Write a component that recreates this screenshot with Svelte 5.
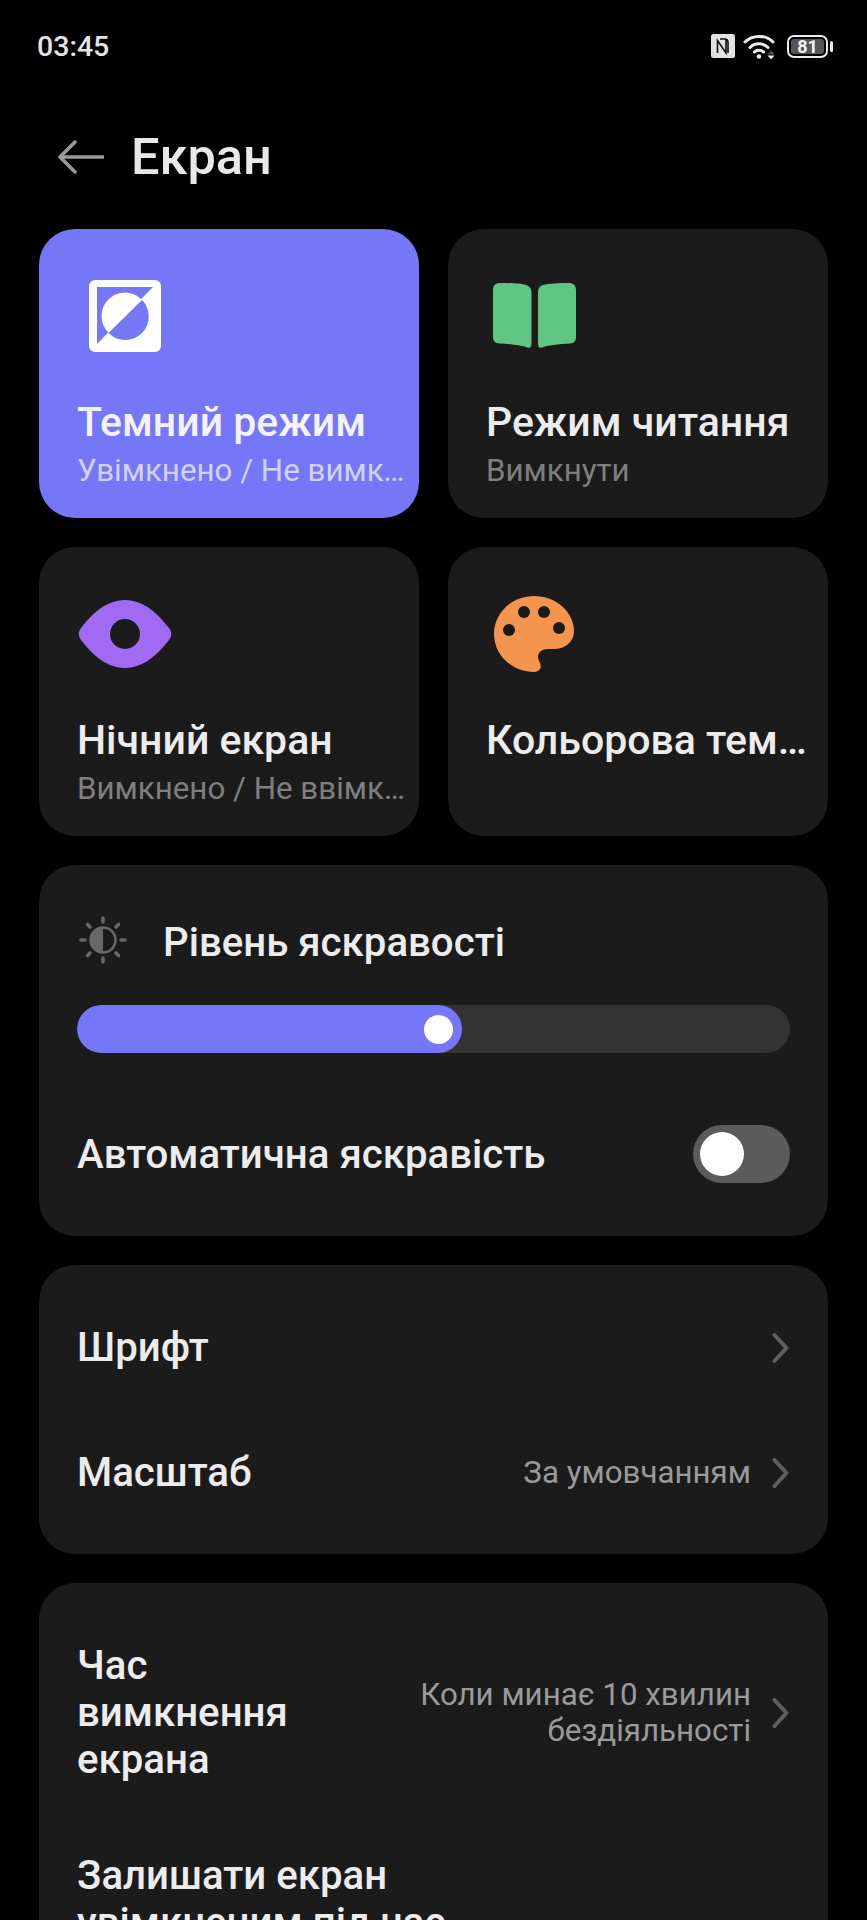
<script>
  const tiles = [
    { title: 'Темний режим', sub: 'Увімкнено / Не вимкнено', icon: 'dark', active: true },
    { title: 'Режим читання', sub: 'Вимкнути', icon: 'book' },
    { title: 'Нічний екран', sub: 'Вимкнено / Не ввімкнено', icon: 'eye' },
    { title: 'Кольорова температура', sub: '', icon: 'palette' }
  ];
  const brightness = 54;
</script>

{#snippet chevron()}
  <svg class="chevron" viewBox="0 0 18 32" width="18" height="32">
    <path d="M2.500 3 14.500 16 2.500 29" fill="none" stroke="#5f5f5f" stroke-width="4" stroke-linecap="round" stroke-linejoin="round" />
  </svg>
{/snippet}

<div class="screen">
  <div class="status">
    <span class="time">03:45</span>
    <div class="status-icons">
      <svg viewBox="0 0 24 24" width="24" height="24">
        <rect width="24" height="24" rx="2.500" fill="#e2e2e2" />
        <path d="M6.500 19V6.500L15 19V5M9 5h4.500c2.500 0 3.500 1.500 3.500 3.500V19" fill="none" stroke="#111" stroke-width="1.600" />
      </svg>
      <svg viewBox="0 0 36 26" width="36" height="26">
        <g fill="none" stroke="#ececec" stroke-width="3" stroke-linecap="round">
          <path d="M2 9C9 1.500 23 1.500 30 9" />
          <path d="M7 14.500C12 9.500 20 9.500 25 14.500" />
          <path d="M11.500 19C14 16.800 18 16.800 20.500 19" />
        </g>
        <circle cx="16" cy="23.500" r="2.300" fill="#ececec" />
        <path d="M28 17.500 31.500 21.500H24.500Z" fill="#555" />
        <path d="M24.500 22.500H31.500L28 26.500Z" fill="#ececec" />
      </svg>
      <div class="battery">
        <div class="battery-body"><span class="battery-level">81</span></div>
        <div class="battery-cap"></div>
      </div>
    </div>
  </div>

  <header class="header">
    <svg viewBox="0 0 46 36" width="46" height="36">
      <path d="M17 3 2 18 17 33M2 18H45" fill="none" stroke="#9a9a9a" stroke-width="3.500" stroke-linecap="round" stroke-linejoin="round" />
    </svg>
    <h1>Екран</h1>
  </header>

  <div class="tiles">
    {#each tiles as tile}
      <div class="card tile" class:active={tile.active}>
        <div class="tile-icon {tile.icon}">
          {#if tile.icon === 'dark'}
            <svg viewBox="0 0 72 72" width="72" height="72">
              <path fill="#fff" fill-rule="evenodd" d="M6 0H66a6 6 0 0 1 6 6V66a6 6 0 0 1-6 6H6a6 6 0 0 1-6-6V6a6 6 0 0 1 6-6ZM8 7V64L64 7Z" />
              <circle cx="36" cy="36" r="23.500" fill="#fff" />
              <path fill="#7676f8" d="M53 20A23.500 23.500 0 0 1 19.500 53Z" />
            </svg>
          {:else if tile.icon === 'book'}
            <svg viewBox="0 0 84 68" width="84" height="68">
              <path fill="#5fc583" d="M7 1C17 1 28 1.500 33 3c4 1.500 5.500 4 5.500 8V62c0 3-1.500 4.500-4 3.500-5-2-17-3.500-28-4C2.500 61.300 0 59 0 55V8C0 3.500 2.500 1 7 1Z" />
              <path fill="#5fc583" d="M76 1C66 1 55 1.500 50 3c-4 1.500-5 4-5 8V62c0 3 1.500 4.500 4 3.500 5-2 17-3.500 28-4 4 -.2 6-2.500 6-6.500V8c0-4.500-2.500-7-7-7Z" />
            </svg>
          {:else if tile.icon === 'eye'}
            <svg viewBox="0 0 94 68" width="94" height="68">
              <path fill="#a06af5" d="M47 0C66 0 80 14 91 28c3 3.500 3 8.500 0 12C80 54 66 68 47 68 28 68 14 54 3 40c-3-3.500-3-8.500 0-12C14 14 28 0 47 0Z" />
              <circle cx="47" cy="34" r="15" fill="#1b1b1c" />
            </svg>
          {:else}
            <svg viewBox="0 0 82 78" width="82" height="78">
              <path fill="#f4954f" d="M41 1C63 1 81 17 81 36c0 11-9 18-20 18H55c-6 0-10 3-10 8 0 2 1 4 2 6 2 4 0 9-6 9C19 77 1 60 1 39S19 1 41 1Z" />
              <circle cx="16" cy="35" r="6" fill="#1b1b1c" />
              <circle cx="31" cy="17" r="6" fill="#1b1b1c" />
              <circle cx="51" cy="17" r="6" fill="#1b1b1c" />
              <circle cx="66" cy="33" r="6" fill="#1b1b1c" />
            </svg>
          {/if}
        </div>
        <div class="tile-title">{tile.title}</div>
        {#if tile.sub}<div class="tile-sub">{tile.sub}</div>{/if}
      </div>
    {/each}
  </div>

  <section class="card brightness">
    <div class="brightness-head">
      <svg viewBox="0 0 48 48" width="48" height="48">
        <g stroke="#686868" stroke-width="3.600" stroke-linecap="round">
          <path d="M24 2V6M24 42V46M2 24H6M42 24H46M8.500 8.500 11 11M37 37 39.500 39.500M8.500 39.500 11 37M37 11 39.500 8.500" />
        </g>
        <circle cx="24" cy="24" r="12.500" fill="none" stroke="#686868" stroke-width="2.500" />
        <path d="M24 11A13 13 0 0 0 24 37Z" fill="#686868" />
      </svg>
      <span class="row-title">Рівень яскравості</span>
    </div>
    <div class="slider">
      <div class="slider-fill" style="width: {brightness}%"><span class="slider-thumb"></span></div>
    </div>
    <div class="auto-row">
      <span class="row-title">Автоматична яскравість</span>
      <div class="toggle"><span class="knob"></span></div>
    </div>
  </section>

  <section class="card group">
    <div class="row">
      <span class="row-title">Шрифт</span>
      {@render chevron()}
    </div>
    <div class="row">
      <span class="row-title">Масштаб</span>
      <span class="row-value">За умовчанням</span>
      {@render chevron()}
    </div>
  </section>

  <section class="card group last">
    <div class="row tall">
      <span class="row-title narrow">Час вимкнення екрана</span>
      <span class="row-value">Коли минає 10 хвилин бездіяльності</span>
      {@render chevron()}
    </div>
    <div class="row second">
      <span class="row-title wide">Залишати екран увімкненим під час</span>
    </div>
  </section>
</div>

<style>
  :global(body) {
    background: #000;
  }

  .screen {
    height: 1920px;
    overflow: hidden;
    box-sizing: border-box;
    padding: 0 39px;
    background: #000;
    color: #ececec;
    font-family: Roboto, "Noto Sans", sans-serif;
  }

  .status {
    height: 92px;
    display: flex;
    align-items: center;
    justify-content: space-between;
    margin: 0 -5px 0 -2px;
  }
  .time {
    font-size: 28.500px;
    font-weight: 500;
    color: #e4e4e4;
  }
  .status-icons {
    display: flex;
    align-items: center;
    gap: 8px;
  }
  .battery {
    display: flex;
    align-items: center;
    gap: 2px;
  }
  .battery-body {
    width: 41px;
    height: 23px;
    padding: 2px;
    border: 2px solid #ececec;
    border-radius: 7px;
    display: flex;
    box-sizing: border-box;
  }
  .battery-level {
    flex: 1;
    background: #555;
    border-radius: 3px;
    color: #f2f2f2;
    font-size: 18px;
    font-weight: 700;
    line-height: 15px;
    text-align: center;
  }
  .battery-cap {
    width: 3px;
    height: 11px;
    background: #ececec;
    border-radius: 2px;
  }

  .header {
    height: 137px;
    display: flex;
    align-items: center;
    gap: 27px;
    padding-left: 19px;
    box-sizing: border-box;
    padding-bottom: 8px;
  }
  h1 {
    margin: 0;
    font-size: 50.500px;
    font-weight: 500;
    color: #e8e8e8;
  }

  .card {
    background: #1b1b1c;
    border-radius: 36px;
    box-sizing: border-box;
  }

  .tiles {
    display: grid;
    grid-template-columns: 380px 380px;
    grid-auto-rows: 289px;
    gap: 29px;
  }
  .tile {
    padding: 0 12px 0 38px;
    min-width: 0;
  }
  .tile.active {
    background: #7676f8;
  }
  .tile-icon {
    height: 174px;
    display: flex;
    align-items: center;
  }
  .tile-icon.dark {
    padding-left: 12px;
  }
  .tile-icon.eye {
    padding-left: 1px;
  }
  .tile-icon.book,
  .tile-icon.palette {
    padding-left: 7px;
  }
  .tile-title {
    font-size: 41px;
    font-weight: 500;
    line-height: 52px;
    margin-top: -7px;
    white-space: nowrap;
    overflow: hidden;
    text-overflow: ellipsis;
  }
  .tile-sub {
    font-size: 31.300px;
    line-height: 45px;
    color: #7f7f7f;
    white-space: nowrap;
    overflow: hidden;
    text-overflow: ellipsis;
  }
  .active .tile-title {
    color: #f3f3fe;
  }
  .active .tile-sub {
    color: #d2d2fc;
  }

  .row-title {
    font-size: 40.200px;
    font-weight: 500;
    line-height: 47px;
    color: #ececec;
  }

  .brightness {
    margin-top: 29px;
    height: 371px;
    padding: 0 38px;
  }
  .brightness-head {
    height: 140px;
    display: flex;
    align-items: center;
    gap: 36px;
    padding: 10px 0 0 2px;
    box-sizing: border-box;
  }
  .brightness-head .row-title {
    margin-top: 4px;
  }
  .slider {
    height: 48px;
    background: #333;
    border-radius: 24px;
    overflow: hidden;
  }
  .slider-fill {
    height: 100%;
    background: #7676f8;
    border-radius: 24px;
    display: flex;
    align-items: center;
    justify-content: flex-end;
    padding-right: 9px;
    box-sizing: border-box;
  }
  .slider-thumb {
    width: 29px;
    height: 29px;
    background: #fff;
    border-radius: 50%;
  }
  .auto-row {
    display: flex;
    align-items: center;
    justify-content: space-between;
    margin-top: 72px;
  }
  .toggle {
    width: 97px;
    height: 58px;
    background: #5b5b5b;
    border-radius: 29px;
    padding: 7px;
    box-sizing: border-box;
  }
  .knob {
    display: block;
    width: 44px;
    height: 44px;
    background: #fff;
    border-radius: 50%;
  }

  .group {
    margin-top: 29px;
    padding: 20px 38px 19px;
  }
  .row {
    min-height: 125px;
    display: flex;
    align-items: center;
  }
  .row-value {
    margin-left: auto;
    width: 345px;
    font-size: 31.300px;
    line-height: 36px;
    color: #9a9a9a;
    text-align: right;
  }
  .chevron {
    flex: none;
    margin-left: auto;
  }
  .row-value + :global(.chevron) {
    margin-left: 21px;
  }
  .last {
    padding-top: 59px;
    padding-bottom: 0;
  }
  .second {
    margin-top: 69px;
    align-items: flex-start;
  }
  .narrow {
    width: 250px;
    flex: none;
  }
  .wide {
    width: 400px;
  }
</style>
